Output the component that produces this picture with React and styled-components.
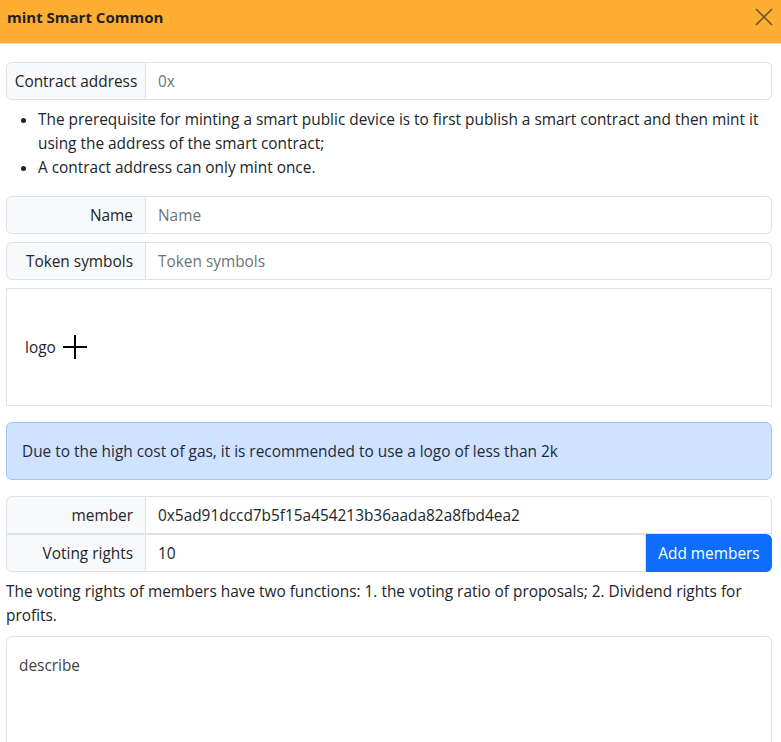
import React from 'react';
import styled, { createGlobalStyle } from 'styled-components';

const GlobalStyle = createGlobalStyle`
  * { box-sizing: border-box; }
  body {
    margin: 0;
    font-family: "Open Sans", "Noto Sans", sans-serif;
    font-size: 15.4px;
    color: #212529;
    background: #fff;
  }
`;

const Header = styled.div`
  height: 44px;
  background: #ffae33;
  border-bottom: 1px solid #f0e0c0;
  display: flex;
  align-items: center;
  justify-content: space-between;
  padding: 0 7px 9px 7px;
`;

const Title = styled.div`
  font-weight: 700;
  font-size: 15px;
  color: #222;
`;

const Close = styled.button`
  border: 0;
  background: transparent;
  padding: 0;
  width: 20px;
  height: 20px;
  display: flex;
  align-items: center;
  justify-content: center;
  color: #6b5a32;
`;

const Body = styled.div`
  padding: 18px 9px 0 6px;
  display: flex;
  flex-direction: column;
`;

const Group = styled.div`
  display: flex;
  height: 38px;
  margin-top: ${p => p.$mt || 0}px;
`;

const Label = styled.div`
  width: 140px;
  flex: none;
  display: flex;
  align-items: center;
  justify-content: ${p => (p.$left ? 'center' : 'flex-end')};
  padding: 0 ${p => (p.$left ? 4 : 12)}px;
  white-space: nowrap;
  background: #f8f9fa;
  border: 1px solid #dee2e6;
  border-radius: ${p => p.$radius || '6px 0 0 6px'};
  color: #212529;
`;

const Field = styled.div`
  flex: 1;
  display: flex;
  align-items: center;
  padding: 0 12px;
  border: 1px solid #dee2e6;
  border-left: 0;
  border-radius: ${p => p.$radius || '0 6px 6px 0'};
  color: ${p => (p.$value ? '#212529' : '#6c757d')};
`;

const Notes = styled.ul`
  margin: 8px 0 16px 0;
  padding-left: 32px;
  line-height: 24px;
`;

const LogoBox = styled.div`
  margin-top: 8px;
  height: 118px;
  border: 1px solid #dee2e6;
  display: flex;
  align-items: center;
  padding-left: 18px;
  gap: 6px;
`;

const Alert = styled.div`
  margin-top: 16px;
  height: 58px;
  background: #cfe2ff;
  border: 1px solid #9ec5fe;
  border-radius: 6px;
  display: flex;
  align-items: center;
  padding: 0 15px;
  color: #1f2a3a;
`;

const AddButton = styled.button`
  width: 126px;
  flex: none;
  border: 0;
  background: #0d6efd;
  color: #fff;
  font: inherit;
  border-radius: 0 6px 6px 0;
`;

const Hint = styled.p`
  margin: 8px 0 8px 0;
  line-height: 24px;
`;

const Describe = styled.div`
  height: 120px;
  border: 1px solid #dee2e6;
  border-radius: 6px;
  padding: 18px 12px;
  color: #444;
`;

export default function App() {
  return (
    <>
      <GlobalStyle />
      <Header>
        <Title>mint Smart Common</Title>
        <Close aria-label="close">
          <svg width="18" height="18" viewBox="0 0 18 18" stroke="currentColor" strokeWidth="1.6">
            <path d="M1 1 L17 17 M17 1 L1 17" />
          </svg>
        </Close>
      </Header>
      <Body>
        <Group>
          <Label $left>Contract address</Label>
          <Field>0x</Field>
        </Group>
        <Notes>
          <li>The prerequisite for minting a smart public device is to first publish a smart contract and then mint it using the address of the smart contract;</li>
          <li>A contract address can only mint once.</li>
        </Notes>
        <Group>
          <Label>Name</Label>
          <Field>Name</Field>
        </Group>
        <Group $mt={8}>
          <Label>Token symbols</Label>
          <Field>Token symbols</Field>
        </Group>
        <LogoBox>
          <span>logo</span>
          <svg width="26" height="26" viewBox="0 0 26 26" stroke="#000" strokeWidth="2">
            <path d="M1 13 H25 M13 1 V25" />
          </svg>
        </LogoBox>
        <Alert>Due to the high cost of gas, it is recommended to use a logo of less than 2k</Alert>
        <Group $mt={16}>
          <Label $radius="6px 0 0 0">member</Label>
          <Field $value $radius="0 6px 0 0">0x5ad91dccd7b5f15a454213b36aada82a8fbd4ea2</Field>
        </Group>
        <Group>
          <Label $radius="0 0 0 6px">Voting rights</Label>
          <Field $value $radius="0">10</Field>
          <AddButton>Add members</AddButton>
        </Group>
        <Hint>The voting rights of members have two functions: 1. the voting ratio of proposals; 2. Dividend rights for profits.</Hint>
        <Describe>describe</Describe>
      </Body>
    </>
  );
}
